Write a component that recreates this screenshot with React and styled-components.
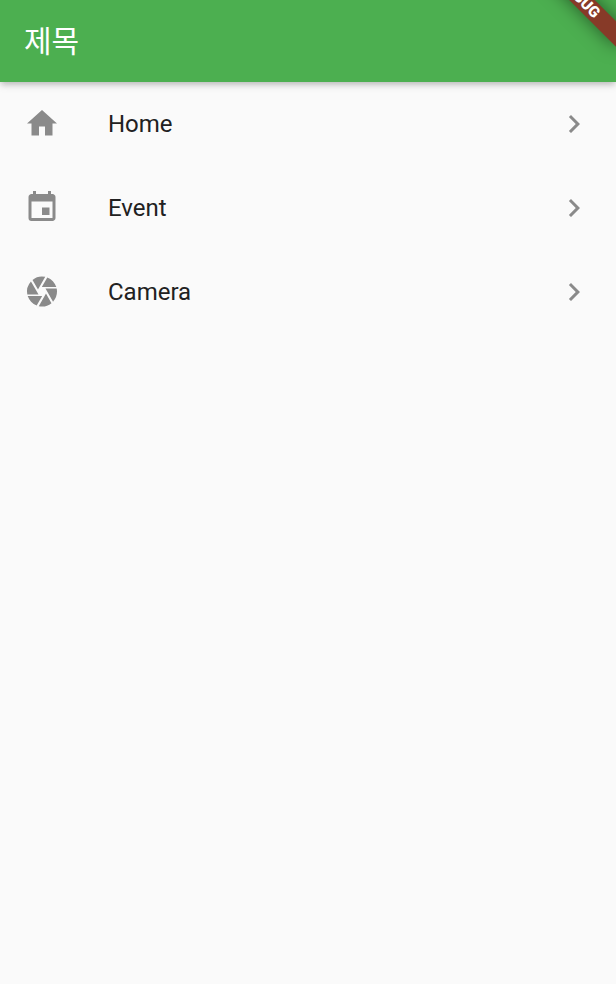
import React from 'react'
import styled, { createGlobalStyle } from 'styled-components'
import { MdCamera, MdChevronRight, MdEvent, MdHome } from 'react-icons/md'

const GlobalStyle = createGlobalStyle`
  body {
    margin: 0;
    background: #fafafa;
  }
`;

const Screen = styled.div`
  position: relative;
  min-height: 100vh;
  overflow: hidden;
  background: #fafafa;
  font-family: Roboto, "Noto Sans CJK KR", sans-serif;
`;

const AppBar = styled.header`
  display: flex;
  align-items: center;
  height: 82px;
  padding: 0 24px 4px;
  box-sizing: border-box;
  background: #4caf50;
  box-shadow: 0 3px 6px -1px rgba(0, 0, 0, 0.2), 0 3px 9px rgba(0, 0, 0, 0.1);
`;

const Title = styled.h1`
  margin: 0;
  color: #fff;
  font-family: "Noto Sans CJK KR", sans-serif;
  font-size: 30px;
  font-weight: 400;
  line-height: 36px;
`;

const List = styled.ul`
  margin: 0;
  padding: 0;
  list-style: none;
`;

const Tile = styled.li`
  display: flex;
  align-items: center;
  height: 84px;
  padding: 0 24px;
  color: #8a8a8a;

  svg {
    flex: none;
  }
`;

const Leading = styled.span`
  display: flex;
  transform: translateY(-0.5px);
`;

const TileText = styled.span`
  flex: 1;
  margin-left: 48px;
  color: #212121;
  font-size: 24px;
  line-height: 28px;
`;

const Banner = styled.div`
  position: absolute;
  top: -11px;
  left: 520px;
  width: 120px;
  height: 18px;
  transform: rotate(45deg);
  background: #873a28;
  box-shadow: 0 0 18px rgba(0, 0, 0, 0.5);
  color: #fff;
  font-size: 15.3px;
  font-weight: 900;
  line-height: 18px;
  text-align: center;
`;

const items = [
  { text: 'Home', Icon: MdHome },
  { text: 'Event', Icon: MdEvent },
  { text: 'Camera', Icon: MdCamera },
]

const App = () => {
  return (
    <Screen>
      <GlobalStyle />
      <AppBar>
        <Title>제목</Title>
      </AppBar>
      <List>
        {items.map(({ text, Icon }) => (
          <Tile key={text}>
            <Leading>
              <Icon size={36} />
            </Leading>
            <TileText>{text}</TileText>
            <MdChevronRight size={36} />
          </Tile>
        ))}
      </List>
      <Banner>DEBUG</Banner>
    </Screen>
  );
}

export default App
